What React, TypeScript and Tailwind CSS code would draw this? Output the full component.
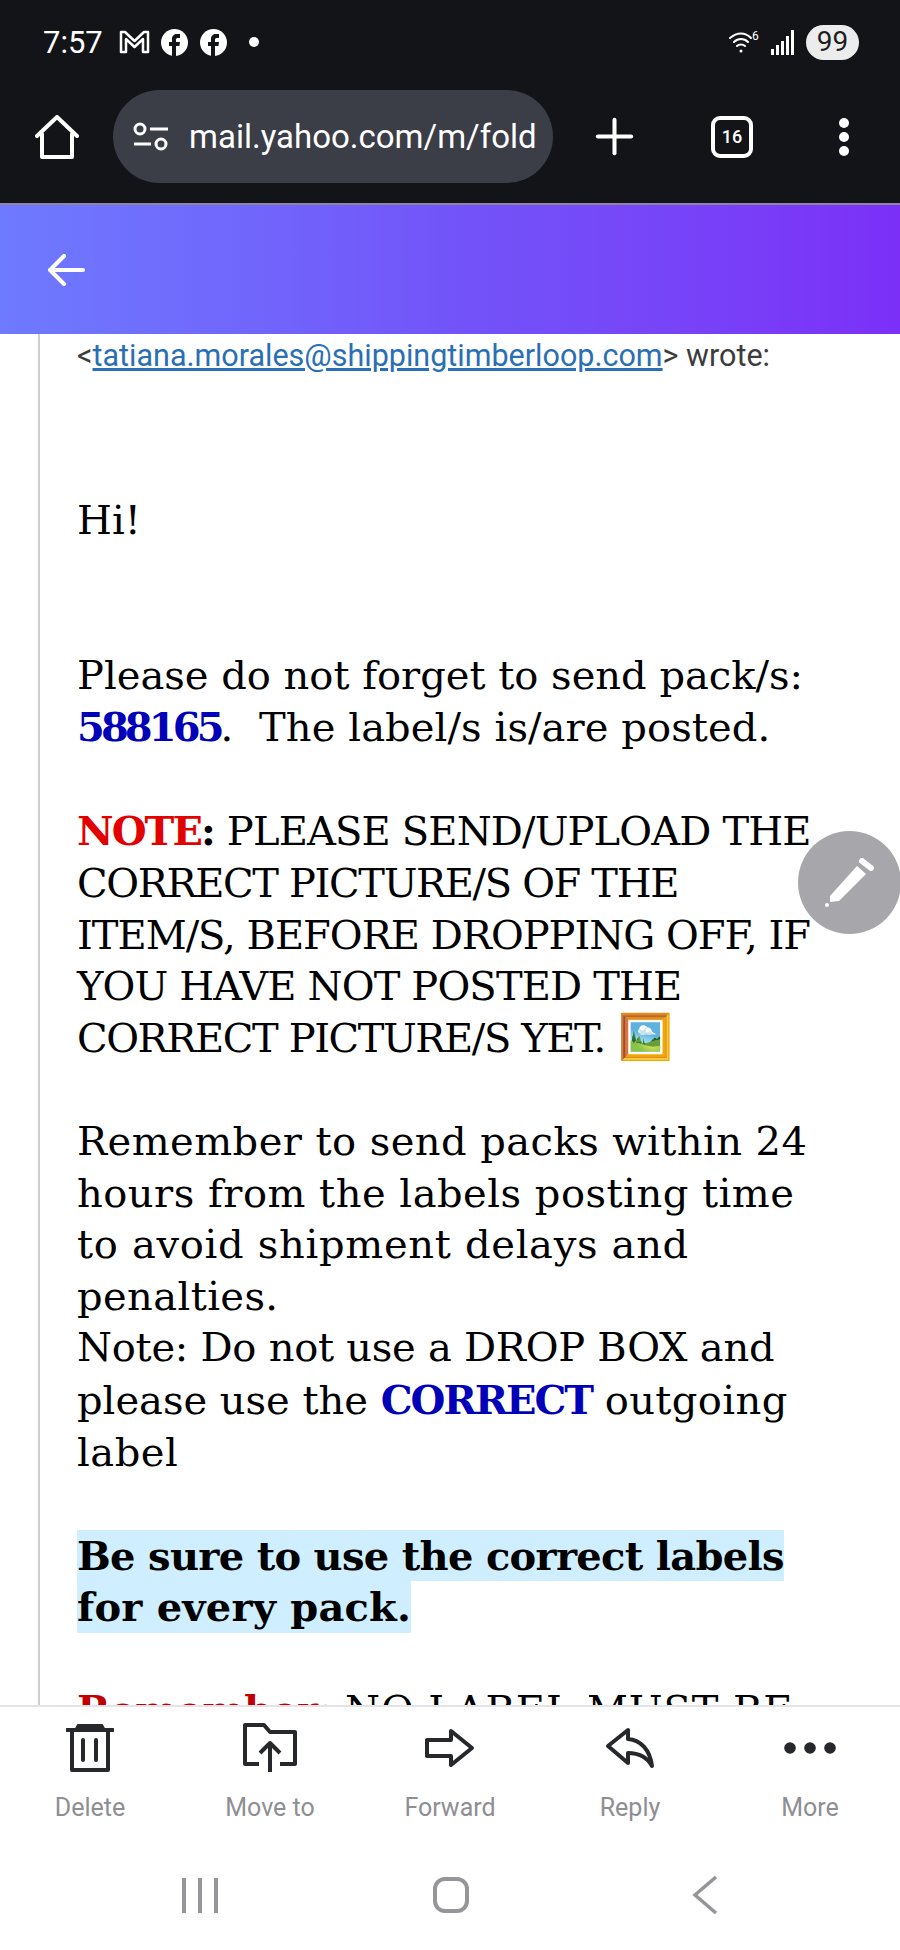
import { Plus } from "lucide-react";

const serif = "font-['DejaVu_Serif',serif]";

function Delete() {
  return (
    <svg width="48" height="50" viewBox="0 0 48 50" fill="none" stroke="#26282c" strokeWidth="4">
      <path d="M6 9v38h36V9" strokeLinejoin="round" />
      <path d="M1 7h46" strokeLinecap="round" />
      <path d="M10 5.500 12 2h24l2 3.500z" fill="#26282c" strokeWidth="2" />
      <path d="M17 17v20M30 17v20" strokeLinecap="round" />
    </svg>
  );
}

function MoveTo() {
  return (
    <svg width="54" height="50" viewBox="0 0 54 50" fill="none" stroke="#26282c" strokeWidth="4" strokeLinejoin="round">
      <path d="M16 41H2V2h19l6 7h25v32H37" />
      <path d="M27 49V21M17 30l10-10 10 10" />
    </svg>
  );
}

function Forward() {
  return (
    <svg width="50" height="40" viewBox="0 0 50 40" fill="none" stroke="#26282c" strokeWidth="4" strokeLinejoin="round">
      <path d="M2 12h24V3l21 17-21 17v-9H2z" />
    </svg>
  );
}

function Reply() {
  return (
    <svg width="50" height="42" viewBox="0 0 50 42" fill="none" stroke="#26282c" strokeWidth="4" strokeLinejoin="round">
      <path d="M3 19 23 3v9c13 1 22 11 24 27-5-9-12-13-24-13v10z" />
    </svg>
  );
}

function More() {
  return (
    <svg width="52" height="12" viewBox="0 0 52 12" fill="#26282c">
      <circle cx="6" cy="6" r="5.800" />
      <circle cx="26" cy="6" r="5.800" />
      <circle cx="46" cy="6" r="5.800" />
    </svg>
  );
}

function FacebookDot() {
  return (
    <svg width="27" height="27" viewBox="0 0 27 27">
      <circle cx="13.500" cy="13.500" r="13.500" fill="#fff" />
      <path d="M11 27V17H8v-4h3v-3c0-3 2-5 5-5h3v4h-2c-1.400 0-2 .6-2 2v2h4l-.6 4H15v10z" fill="#131417" />
    </svg>
  );
}

const actions = [
  { label: "Delete", icon: <Delete /> },
  { label: "Move to", icon: <MoveTo /> },
  { label: "Forward", icon: <Forward /> },
  { label: "Reply", icon: <Reply /> },
  { label: "More", icon: <More /> },
];

export default function App() {
  return (
    <div className="relative flex h-[1950px] w-[900px] flex-col overflow-hidden bg-white font-['Roboto',sans-serif]">
      {/* Status bar and browser bar */}
      <header className="h-[203px] shrink-0 bg-[#131417] text-white">
        <div className="flex h-[84px] items-center pl-[43px] pr-[41px]">
          <span className="text-[31px] leading-none">7:57</span>
          <svg className="ml-[16px]" width="31" height="24" viewBox="0 0 31 24" fill="none" stroke="#fff" strokeWidth="2.500" strokeLinejoin="round">
            <path d="M2 22V2h4l9.500 9L25 2h4v20h-5V9l-8.500 8L7 9v13z" />
          </svg>
          <span className="ml-[11px] flex"><FacebookDot /></span>
          <span className="ml-[12px] flex"><FacebookDot /></span>
          <span className="ml-[22px] h-[10px] w-[10px] rounded-full bg-white" />
          <svg className="ml-auto" width="31" height="24" viewBox="0 0 31 24" fill="none" stroke="#fff" strokeWidth="2" strokeLinecap="round">
            <path d="M1 8c7-6 15-6 21 0M5 12c4-4 10-4 14 0M8 16c2-2 6-2 8 0" />
            <circle cx="12" cy="21" r="1.500" fill="#fff" stroke="none" />
            <text x="23" y="10" fontSize="12" fill="#fff" stroke="none" fontFamily="Roboto">6</text>
          </svg>
          <svg className="ml-[11px]" width="24" height="25" viewBox="0 0 24 25" fill="#fff">
            <rect x="0" y="19" width="3" height="6" />
            <rect x="5" y="15" width="3" height="10" />
            <rect x="10" y="11" width="3" height="14" />
            <rect x="15" y="6" width="3" height="19" />
            <rect x="20" y="0" width="3" height="25" />
          </svg>
          <span className="ml-[11px] flex h-[35px] w-[53px] items-center justify-center rounded-full bg-[#ececec] text-[28px] text-[#1c1d20]">99</span>
        </div>
        <div className="mt-[6px] flex h-[93px] items-center">
          <svg className="ml-[35px] shrink-0" width="44" height="44" viewBox="0 0 44 44" fill="none" stroke="#fff" strokeWidth="4" strokeLinejoin="round" strokeLinecap="round">
            <path d="M2 21 22 2l20 19M7 19v23h30V19" />
          </svg>
          <div className="ml-[34px] flex h-[93px] w-[440px] shrink-0 items-center rounded-full bg-[#3b3d47] pl-[20px]">
            <svg className="shrink-0" width="36" height="30" viewBox="0 0 36 30" fill="none" stroke="#fff" strokeWidth="3">
              <circle cx="7" cy="7" r="5" />
              <circle cx="28" cy="22" r="5" />
              <path d="M17 7h18M1 22h17" />
            </svg>
            <span className="ml-[20px] whitespace-nowrap text-[33px] leading-none">mail.yahoo.com/m/fold</span>
          </div>
          <Plus className="ml-[33px] shrink-0" size={57} strokeWidth={1.700} />
          <div className="ml-[68px] flex h-[42px] w-[42px] shrink-0 items-center justify-center rounded-[9px] border-4 border-white text-[18px] font-medium">16</div>
          <div className="ml-[86px] flex shrink-0 flex-col gap-[4px]">
            <span className="h-[10px] w-[10px] rounded-full bg-white" />
            <span className="h-[10px] w-[10px] rounded-full bg-white" />
            <span className="h-[10px] w-[10px] rounded-full bg-white" />
          </div>
        </div>
      </header>

      {/* Purple mail toolbar */}
      <div className="flex h-[131px] shrink-0 items-center border-t-2 border-[#8d84a6] bg-gradient-to-r from-[#6e7aff] via-[#7254f9] to-[#7b2ff7] pl-[47px]">
        <svg width="38" height="32" viewBox="0 0 38 32" fill="none" stroke="#fff" strokeWidth="4" strokeLinecap="round" strokeLinejoin="round">
          <path d="M36 16H3M17 2 3 16l14 14" />
        </svg>
      </div>

      {/* Quoted message */}
      <main className={`min-h-0 flex-1 overflow-hidden pl-[38px] ${serif}`}>
        <div className="h-[2000px] border-l-2 border-[#cfcfcf] pl-[37px] text-[40px] leading-[51.600px] text-black">
          <p className="pt-[4px] font-['Roboto',sans-serif] text-[30.500px] leading-[36px] text-[#3c3c3c]">
            &lt;<span className="text-[#2a6fb5] underline">tatiana.morales@shippingtimberloop.com</span>&gt; wrote:
          </p>
          <p className="mt-[121px]">Hi!</p>
          <p className="mt-[103px]">
            Please do not forget to send pack/s:
            <br />
            <b className="tracking-[-3.900px] text-[#0000b8]">588165</b>
            <span className="tracking-[0.100px]">.&nbsp; The label/s is/are posted.</span>
          </p>
          <p className="mt-[51.600px]">
            <b className="tracking-[-1.900px] text-[#e30000]">NOTE</b>
            <span className="tracking-[-0.850px]"><b>:</b> PLEASE SEND/UPLOAD THE</span>
            <br />
            <span className="tracking-[-1.350px]">CORRECT PICTURE/S OF THE</span>
            <br />
            <span className="tracking-[-1px]">ITEM/S, BEFORE DROPPING OFF, IF</span>
            <br />
            <span className="tracking-[-0.850px]">YOU HAVE NOT POSTED THE</span>
            <br />
            <span className="tracking-[-1.400px]">CORRECT PICTURE/S YET.</span>{" "}
            <span className="font-['Noto_Sans',sans-serif] text-[44px] leading-[0]">🖼️</span>
          </p>
          <p className="mt-[51.600px]">
            <span className="tracking-[0.450px]">Remember to send packs within 24</span>
            <br />
            <span className="tracking-[0.500px]">hours from the labels posting time</span>
            <br />
            <span className="tracking-[0.700px]">to avoid shipment delays and</span>
            <br />
            <span className="tracking-[0.400px]">penalties.</span>
            <br />
            <span className="tracking-[-0.250px]">Note: Do not use a DROP BOX and</span>
            <br />
            please use the <b className="tracking-[-2px] text-[#0000b8]">CORRECT</b>{" "}
            <span className="tracking-[0.400px]">outgoing</span>
            <br />
            <span className="tracking-[0.500px]">label</span>
          </p>
          <p className="mt-[51.600px] font-bold">
            <span className="inline-block bg-[#cfeeff] tracking-[-0.700px]">Be sure to use the correct labels</span>
            <br />
            <span className="inline-block bg-[#cfeeff] tracking-[0.200px]">for every pack.</span>
          </p>
          <p className="mt-[51.600px]">
            <b className="tracking-[-0.300px] text-[#c00000]">Remember:</b> <span className="tracking-[0.900px]">NO LABEL MUST BE</span>
          </p>
        </div>
      </main>

      {/* Action bar */}
      <nav className="grid h-[145px] shrink-0 grid-cols-5 border-t-2 border-[#e4e3e8] bg-white">
        {actions.map((a) => (
          <div key={a.label} className="flex flex-col items-center">
            <div className="flex h-[82px] items-center">{a.icon}</div>
            <span className="mt-[5px] text-[25px] leading-[28px] text-[#8e8e93]">{a.label}</span>
          </div>
        ))}
      </nav>

      {/* Android navigation */}
      <div className="h-[100px] shrink-0 bg-white pl-[2px] pt-[26px]">
        <div className="mx-auto grid w-[754px] grid-cols-3 items-center justify-items-center">
          <div className="flex gap-[12px]">
            <span className="h-[35px] w-[4px] bg-[#96969a]" />
            <span className="h-[35px] w-[4px] bg-[#96969a]" />
            <span className="h-[35px] w-[4px] bg-[#96969a]" />
          </div>
          <span className="h-[36px] w-[36px] rounded-[12px] border-4 border-[#96969a]" />
          <svg className="ml-[6px]" width="26" height="38" viewBox="0 0 26 38" fill="none" stroke="#96969a" strokeWidth="3.500">
            <path d="M24 1 3 19l21 18" />
          </svg>
        </div>
      </div>

      {/* Floating compose button */}
      <button className="absolute left-[798px] top-[831px] flex h-[103px] w-[103px] items-center justify-center rounded-full bg-[#a7a6aa]">
        <svg width="50" height="50" viewBox="0 0 50 50" fill="#fff">
          <path d="M5 38 32 8l9 8-27 27-9 1z" />
          <path d="m37 3 9 7" stroke="#fff" strokeWidth="6" strokeLinecap="round" />
          <circle cx="2" cy="47" r="2" />
        </svg>
      </button>
    </div>
  );
}
